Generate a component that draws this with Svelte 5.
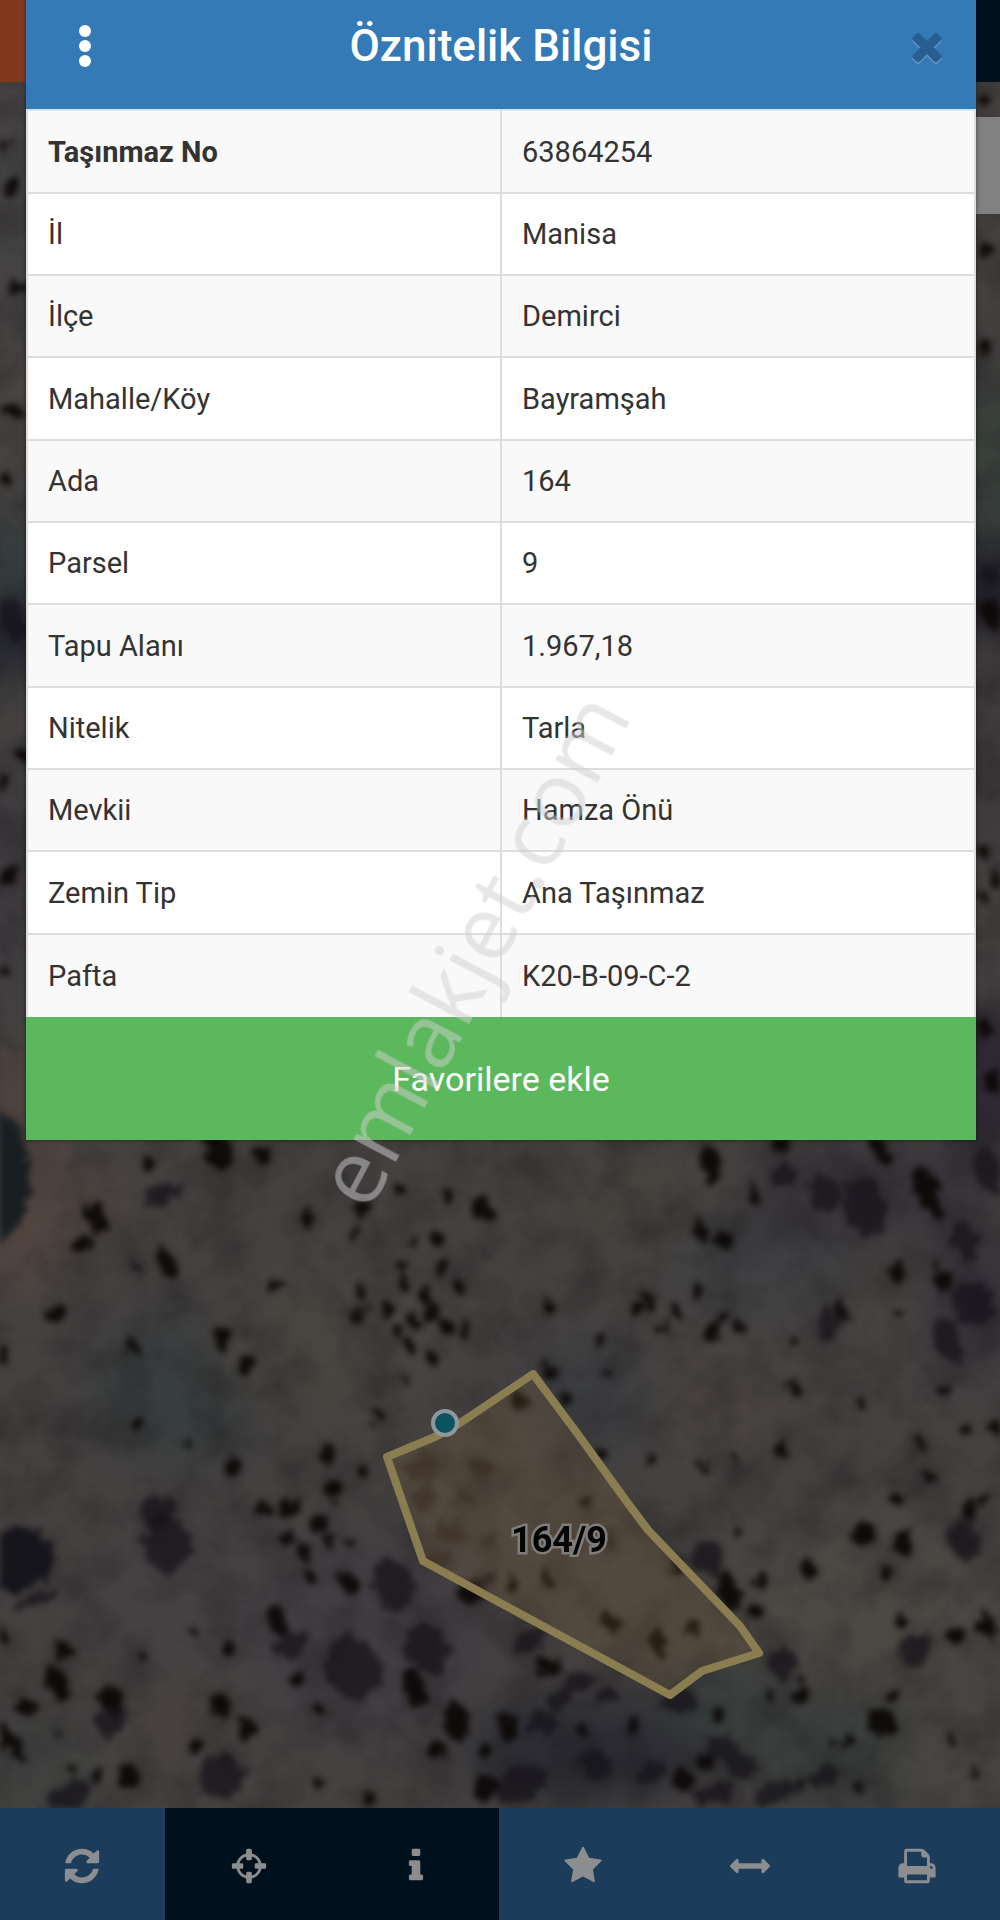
<script lang="ts">
  const rows = [
    { label: 'Taşınmaz No', value: '63864254', strong: true },
    { label: 'İl', value: 'Manisa' },
    { label: 'İlçe', value: 'Demirci' },
    { label: 'Mahalle/Köy', value: 'Bayramşah' },
    { label: 'Ada', value: '164' },
    { label: 'Parsel', value: '9' },
    { label: 'Tapu Alanı', value: '1.967,18' },
    { label: 'Nitelik', value: 'Tarla' },
    { label: 'Mevkii', value: 'Hamza Önü' },
    { label: 'Zemin Tip', value: 'Ana Taşınmaz' },
    { label: 'Pafta', value: 'K20-B-09-C-2' }
  ];

  const tools = [
    {
      name: 'Yenile',
      dark: false,
      path: 'M1639 1056q0 5-1 7-64 268-268 434.5t-478 166.5q-146 0-282.5-55t-243.5-157l-129 129q-19 19-45 19t-45-19-19-45v-448q0-26 19-45t45-19h448q26 0 45 19t19 45-19 45l-137 137q71 66 161 102t187 36q134 0 250-65t186-179q11-17 53-117 8-23 30-23h192q13 0 22.5 9.5t9.5 22.5zm25-800v448q0 26-19 45t-45 19h-448q-26 0-45-19t-19-45 19-45l138-138q-148-137-349-137-134 0-250 65t-186 179q-11 17-53 117-8 23-30 23h-199q-13 0-22.5-9.5t-9.5-22.5v-7q65-268 270-434.5t480-166.5q146 0 284 55.5t245 156.5l130-129q19-19 45-19t45 19 19 45z'
    },
    {
      name: 'Konum',
      dark: true,
      path: 'M1325 1024h-109q-26 0-45-19t-19-45v-128q0-26 19-45t45-19h109q-32-108-112.5-188.5t-188.5-112.5v109q0 26-19 45t-45 19h-128q-26 0-45-19t-19-45v-109q-108 32-188.5 112.5t-112.5 188.5h109q26 0 45 19t19 45v128q0 26-19 45t-45 19h-109q32 108 112.5 188.5t188.5 112.5v-109q0-26 19-45t45-19h128q26 0 45 19t19 45v109q108-32 188.5-112.5t112.5-188.5zm339-192v128q0 26-19 45t-45 19h-143q-37 161-154.5 278.5t-278.5 154.5v143q0 26-19 45t-45 19h-128q-26 0-45-19t-19-45v-143q-161-37-278.5-154.5t-154.5-278.5h-143q-26 0-45-19t-19-45v-128q0-26 19-45t45-19h143q37-161 154.5-278.5t278.5-154.5v-143q0-26 19-45t45-19h128q26 0 45 19t19 45v143q161 37 278.5 154.5t154.5 278.5h143q26 0 45 19t19 45z'
    },
    {
      name: 'Bilgi',
      dark: true,
      path: 'M1216 1344v128q0 26-19 45t-45 19h-512q-26 0-45-19t-19-45v-128q0-26 19-45t45-19h64v-384h-64q-26 0-45-19t-19-45v-128q0-26 19-45t45-19h384q26 0 45 19t19 45v576h64q26 0 45 19t19 45zm-128-1152v192q0 26-19 45t-45 19h-256q-26 0-45-19t-19-45v-192q0-26 19-45t45-19h256q26 0 45 19t19 45z'
    },
    {
      name: 'Favoriler',
      dark: false,
      path: 'M1728 647q0 22-26 48l-363 354 86 500q1 7 1 20 0 21-10.5 35.5t-30.5 14.5q-19 0-40-12l-449-236-449 236q-22 12-40 12-21 0-31.5-14.5t-10.5-35.5q0-6 2-20l86-500-364-354q-25-27-25-48 0-37 56-46l502-73 225-455q19-41 49-41t49 41l225 455 502 73q56 9 56 46z'
    },
    {
      name: 'Ölçüm',
      dark: false,
      path: 'M1792 896q0 26-19 45l-256 256q-19 19-45 19t-45-19-19-45v-128h-1024v128q0 26-19 45t-45 19-45-19l-256-256q-19-19-19-45t19-45l256-256q19-19 45-19t45 19 19 45v128h1024v-128q0-26 19-45t45-19 45 19l256 256q19 19 19 45z'
    },
    {
      name: 'Yazdır',
      dark: false,
      path: 'M448 1536h896v-256h-896v256zm0-640h896v-384h-160q-40 0-68-28t-28-68v-160h-640v640zm1152 64q0-26-19-45t-45-19-45 19-19 45 19 45 45 19 45-19 19-45zm128 0v416q0 13-9.5 22.5t-22.5 9.5h-224v160q0 40-28 68t-68 28h-960q-40 0-68-28t-28-68v-160h-224q-13 0-22.5-9.5t-9.5-22.5v-416q0-79 56.5-135.5t135.5-56.5h64v-544q0-40 28-68t68-28h672q40 0 88 20t76 48l152 152q28 28 48 76t20 88v256h64q79 0 135.5 56.5t56.5 135.5z'
    }
  ];

  // ground tint: x, y, rx, ry, colour
  const patches: [number, number, number, number, string][] = [
    [180, 1390, 90, 70, '#383d3e'],
    [70, 1200, 60, 40, '#4e4541'],
    [20, 1250, 40, 40, '#564944'],
    [330, 1340, 120, 90, '#484440'],
    [640, 1200, 130, 60, '#47433f'],
    [760, 1260, 90, 50, '#3f4042'],
    [700, 1400, 120, 60, '#4a4543'],
    [930, 1300, 60, 50, '#4b4641'],
    [590, 1400, 60, 60, '#3c3d40'],
    [200, 1600, 110, 60, '#464143'],
    [250, 1730, 200, 70, '#474241'],
    [40, 1770, 60, 50, '#3f413f'],
    [370, 1640, 120, 100, '#413d42'],
    [590, 1750, 130, 50, '#2c2c33'],
    [720, 1700, 60, 40, '#383e3c'],
    [860, 1600, 140, 90, '#4c4844'],
    [850, 1750, 110, 50, '#383d3b'],
    [950, 1750, 60, 70, '#484642'],
    [870, 1190, 130, 50, '#38343a'],
    [970, 1300, 50, 70, '#353139'],
    [10, 200, 40, 120, '#464445'],
    [10, 430, 40, 60, '#4a4743'],
    [10, 570, 40, 60, '#343b3d'],
    [10, 640, 40, 40, '#20232b'],
    [10, 880, 40, 120, '#3e3b3f'],
    [990, 470, 40, 100, '#38403b'],
    [990, 590, 40, 50, '#1d1c26'],
    [990, 760, 40, 100, '#3e393a'],
    [990, 1080, 40, 80, '#2d2832']
  ];

  // tree crowns and shadows: x, y, rx, ry
  const trees = [
    [218, 1150, 12, 22], [262, 1155, 7, 10], [148, 1165, 6, 10], [163, 1193, 17, 12], [98, 1217, 10, 16],
    [81, 1243, 8, 9], [168, 1263, 10, 16], [308, 1216, 5, 9], [362, 1209, 6, 6], [400, 1189, 5, 6],
    [449, 1194, 6, 7], [482, 1209, 10, 14], [275, 1283, 6, 5], [57, 1314, 9, 8], [133, 1346, 6, 6],
    [222, 1339, 8, 13], [247, 1366, 7, 11], [140, 1426, 6, 6], [187, 1444, 6, 6], [233, 1466, 10, 12],
    [377, 1414, 6, 7], [328, 1453, 10, 9], [363, 1471, 7, 7], [1, 1355, 5, 14], [414, 1243, 5, 7],
    [436, 1240, 6, 8], [405, 1283, 6, 6], [442, 1267, 7, 6], [456, 1285, 5, 7], [424, 1297, 7, 9],
    [388, 1310, 8, 6], [412, 1323, 7, 8], [433, 1313, 7, 7], [445, 1327, 8, 9], [466, 1327, 5, 7],
    [433, 1358, 5, 9], [410, 1345, 5, 8], [363, 1292, 5, 7], [356, 1317, 4, 8], [353, 1233, 5, 6],
    [400, 1267, 6, 7], [404, 1377, 4, 5], [135, 1265, 4, 8], [397, 1333, 5, 5], [366, 1309, 4, 4],
    [710, 1163, 9, 20], [752, 1190, 5, 12], [783, 1175, 14, 8], [825, 1193, 15, 18], [865, 1207, 20, 32],
    [928, 1190, 12, 26], [987, 1170, 14, 25], [702, 1230, 6, 12], [723, 1239, 9, 8], [965, 1240, 13, 20],
    [900, 1273, 8, 11], [942, 1277, 6, 16], [973, 1303, 20, 22], [947, 1340, 13, 24], [828, 1323, 14, 14],
    [843, 1310, 6, 10], [637, 1310, 7, 8], [675, 1310, 8, 7], [663, 1327, 8, 5], [711, 1332, 8, 8],
    [740, 1327, 6, 8], [697, 1289, 5, 8], [549, 1307, 6, 8], [599, 1342, 6, 6], [548, 1373, 6, 8],
    [606, 1371, 5, 6], [520, 1402, 9, 8], [568, 1400, 4, 5], [795, 1388, 6, 11], [920, 1443, 6, 9],
    [964, 1428, 5, 7], [782, 1452, 7, 8], [702, 1467, 5, 9], [650, 1458, 5, 4], [942, 1392, 5, 5],
    [602, 1455, 6, 7], [737, 1458, 5, 7], [898, 1314, 4, 5], [863, 1403, 4, 7], [793, 1339, 4, 5],
    [997, 1430, 5, 9], [780, 1143, 10, 6], [880, 1150, 8, 18], [650, 1300, 6, 9], [721, 1318, 4, 5],
    [18, 1560, 36, 32], [37, 1600, 22, 7], [157, 1510, 16, 18], [168, 1545, 24, 28], [263, 1509, 9, 10],
    [292, 1507, 12, 8], [317, 1523, 11, 8], [287, 1537, 8, 7], [303, 1550, 8, 8], [330, 1538, 5, 6],
    [348, 1541, 5, 6], [310, 1577, 5, 7], [349, 1582, 8, 13], [393, 1585, 20, 28], [277, 1620, 9, 16],
    [290, 1645, 16, 14], [353, 1667, 26, 34], [427, 1648, 20, 26], [415, 1690, 12, 20], [457, 1720, 12, 20],
    [437, 1750, 10, 10], [298, 1678, 8, 7], [318, 1708, 6, 7], [62, 1648, 7, 13], [58, 1683, 10, 18],
    [25, 1707, 9, 11], [112, 1700, 12, 15], [110, 1722, 15, 14], [218, 1704, 9, 10], [248, 1730, 8, 11],
    [5, 1737, 8, 14], [17, 1750, 6, 12], [60, 1735, 4, 5], [127, 1775, 11, 12], [72, 1793, 22, 12],
    [72, 1767, 5, 6], [97, 1775, 6, 5], [222, 1775, 22, 22], [195, 1746, 6, 7], [318, 1782, 5, 6],
    [368, 1797, 6, 6], [485, 1788, 12, 14], [485, 1750, 6, 7], [192, 1629, 4, 5], [142, 1655, 4, 5],
    [230, 1647, 5, 9], [3, 1635, 6, 8], [333, 1488, 9, 7], [337, 1503, 4, 4], [472, 1593, 12, 9],
    [707, 1557, 16, 18], [727, 1590, 11, 20], [737, 1528, 5, 7], [762, 1581, 6, 8], [755, 1612, 6, 7],
    [809, 1569, 7, 9], [863, 1535, 11, 11], [903, 1543, 10, 13], [887, 1574, 8, 6], [896, 1500, 7, 8],
    [965, 1540, 14, 20], [968, 1510, 7, 9], [983, 1498, 6, 8], [930, 1478, 4, 5], [899, 1620, 7, 9],
    [913, 1650, 15, 17], [956, 1637, 9, 8], [988, 1627, 11, 14], [782, 1663, 14, 15], [799, 1680, 6, 6],
    [802, 1697, 8, 8], [772, 1695, 5, 8], [890, 1695, 6, 5], [883, 1723, 12, 15], [833, 1743, 5, 6],
    [848, 1743, 5, 7], [952, 1740, 5, 8], [973, 1776, 5, 7], [825, 1777, 18, 10], [858, 1790, 5, 6],
    [800, 1785, 6, 6], [530, 1640, 18, 10], [550, 1667, 12, 9], [578, 1682, 15, 10], [607, 1697, 14, 9],
    [560, 1700, 14, 9], [543, 1722, 16, 11], [507, 1730, 8, 14], [632, 1727, 9, 7], [583, 1732, 6, 5],
    [680, 1700, 16, 12], [718, 1713, 6, 10], [722, 1750, 16, 14], [743, 1767, 16, 12], [705, 1763, 8, 10],
    [595, 1765, 14, 18], [652, 1773, 14, 10], [683, 1780, 10, 12], [520, 1785, 26, 18], [713, 1795, 20, 10],
    [773, 1793, 20, 10], [547, 1580, 6, 11], [612, 1623, 11, 10], [659, 1643, 7, 14], [693, 1628, 6, 8],
    [512, 1583, 7, 9], [588, 1502, 5, 9], [677, 1567, 8, 7], [480, 1582, 18, 6],
    [4, 144, 7, 8], [12, 186, 7, 8], [17, 288, 10, 6], [13, 410, 8, 6], [5, 481, 6, 5], [12, 620, 14, 22],
    [23, 755, 6, 9], [3, 783, 6, 10], [10, 874, 10, 9], [5, 972, 6, 5], [984, 100, 7, 7], [985, 250, 9, 6],
    [985, 348, 8, 8], [990, 575, 14, 10], [993, 614, 12, 14], [983, 850, 5, 8], [997, 880, 5, 8],
    [984, 900, 5, 6], [984, 1028, 6, 9], [993, 1085, 10, 12]
  ];

  // softer scrub inside the parcel
  const scrub = [
    [420, 1468, 18, 14], [483, 1467, 13, 11], [465, 1497, 9, 8], [425, 1500, 13, 14], [450, 1530, 14, 9],
    [440, 1560, 12, 8], [490, 1540, 7, 6], [610, 1540, 6, 10]
  ];

  let open = $state(true);
  let favorite = $state(false);
</script>

<svelte:head>
  <title>Öznitelik Bilgisi</title>
</svelte:head>

<div class="screen">
  <header class="topbar">
    <button class="menu-btn" aria-label="Menü"></button>
  </header>

  <main class="map">
    <svg class="map-canvas" viewBox="0 82 1000 1726" preserveAspectRatio="xMidYMax slice" role="img" aria-label="Harita">
      <defs>
        <filter id="ground" x="0" y="0" width="100%" height="100%" color-interpolation-filters="sRGB">
          <feTurbulence type="fractalNoise" baseFrequency="0.02" numOctaves="4" seed="8" />
          <feColorMatrix values="0 0 0 0 0.08  0 0 0 0 0.07  0 0 0 0 0.08  1.6 0 0 0 -0.6" />
        </filter>
        <filter id="soft" x="-100%" y="-100%" width="300%" height="300%" color-interpolation-filters="sRGB">
          <feGaussianBlur stdDeviation="24" />
        </filter>
        <filter id="rough" x="0" y="82" width="1000" height="1726" filterUnits="userSpaceOnUse" color-interpolation-filters="sRGB">
          <feTurbulence type="fractalNoise" baseFrequency="0.09" numOctaves="2" seed="3" result="noise" />
          <feDisplacementMap in="SourceGraphic" in2="noise" scale="20" xChannelSelector="R" yChannelSelector="G" />
          <feGaussianBlur stdDeviation="3" />
        </filter>
      </defs>

      <rect y="82" width="1000" height="1726" fill="#444140" />
      <g filter="url(#soft)">
        {#each patches as [x, y, rx, ry, fill]}
          <ellipse cx={x} cy={y} {rx} {ry} {fill} />
        {/each}
      </g>
      <rect y="82" width="1000" height="1726" filter="url(#ground)" opacity="0.4" />
      <g filter="url(#rough)">
        <path d="M-20 1290 Q60 1240 72 1140 L50 1060 L-20 1040 Z" fill="#51443f" opacity="0.6" />
        <ellipse cx="-8" cy="1176" rx="38" ry="66" fill="#181e22" />
        {#each trees as [x, y, rx, ry]}
          <ellipse
            cx={x}
            cy={y}
            {rx}
            {ry}
            transform="rotate(-20 {x} {y})"
            fill={rx > 12 ? '#15131a' : '#0c0807'}
            opacity={rx > 30 ? 0.95 : rx > 12 ? 0.75 : 0.95}
          />
        {/each}
        {#each scrub as [x, y, rx, ry]}
          <ellipse cx={x} cy={y} {rx} {ry} fill="#1c1311" opacity="0.45" />
        {/each}
      </g>

      <!-- parcel outline -->
      <path
        class="parcel"
        d="M533 1374 L460 1423 L437 1436 L387 1457 L423 1561 L670 1695 L702 1671 L759 1653 L740 1626 L648 1530 L627 1502 L577 1433 Z"
      />
      <circle class="vertex" cx="445" cy="1423" r="12" />
      <text class="parcel-label" x="559" y="1552" text-anchor="middle">164/9</text>
    </svg>

    <button class="layers-btn" aria-label="Katmanlar"></button>
  </main>

  <nav class="toolbar" aria-label="Harita araçları">
    {#each tools as tool}
      <button class="tool" class:dark={tool.dark} aria-label={tool.name}>
        <svg viewBox="0 0 1792 1792" aria-hidden="true"><path d={tool.path} /></svg>
      </button>
    {/each}
  </nav>

  {#if open}
    <section class="modal" role="dialog" aria-labelledby="modal-title">
      <div class="modal-header">
        <button class="icon-btn options" aria-label="Seçenekler">
          <svg class="dots" viewBox="0 0 12 42" aria-hidden="true">
            <circle cx="6" cy="6" r="6" />
            <circle cx="6" cy="21" r="6" />
            <circle cx="6" cy="36" r="6" />
          </svg>
        </button>
        <h1 id="modal-title">Öznitelik Bilgisi</h1>
        <button class="icon-btn" aria-label="Kapat" onclick={() => (open = false)}>
          <svg class="times" viewBox="0 0 1792 1792" aria-hidden="true">
            <path d="M1490 1322q0 40-28 68l-136 136q-28 28-68 28t-68-28l-294-294-294 294q-28 28-68 28t-68-28l-136-136q-28-28-28-68t28-68l294-294-294-294q-28-28-28-68t28-68l136-136q28-28 68-28t68 28l294 294 294-294q28-28 68-28t68 28l136 136q28 28 28 68t-28 68l-294 294 294 294q28 28 28 68z" />
          </svg>
        </button>
      </div>

      <table>
        <tbody>
          {#each rows as row}
            <tr>
              <th scope="row" class:strong={row.strong}>{row.label}</th>
              <td>{row.value}</td>
            </tr>
          {/each}
        </tbody>
      </table>

      <button class="favorite" aria-pressed={favorite} onclick={() => (favorite = !favorite)}>
        Favorilere ekle
      </button>
    </section>
  {/if}

  <div class="watermark" aria-hidden="true">emlakjet.com</div>
</div>

<style>
  :global(body) {
    margin: 0;
    background: #3e3c3b;
  }

  .screen {
    position: relative;
    display: flex;
    flex-direction: column;
    min-height: 100vh;
    overflow: hidden;
    font-family: Roboto, 'Liberation Sans', sans-serif;
    color: #333;
  }

  button {
    margin: 0;
    padding: 0;
    border: 0;
    font: inherit;
    color: inherit;
    cursor: pointer;
  }

  .topbar {
    display: flex;
    height: 82px;
    background: #00101c;
  }

  .menu-btn {
    width: 82px;
    background: #80391b;
  }

  .map {
    position: relative;
    flex: 1;
  }

  .map-canvas {
    position: absolute;
    inset: 0;
    width: 100%;
    height: 100%;
  }

  .parcel {
    fill: rgba(150, 112, 60, 0.18);
    stroke: #8a7e50;
    stroke-width: 8;
    stroke-linejoin: round;
  }

  .vertex {
    fill: #0b5360;
    stroke: #8d979c;
    stroke-width: 4;
  }

  .parcel-label {
    font-size: 36px;
    font-weight: 700;
    fill: #050505;
    stroke: #7f7c7a;
    stroke-width: 5;
    paint-order: stroke;
  }

  .layers-btn {
    position: absolute;
    top: 35px;
    right: 0;
    width: 64px;
    height: 97px;
    background: #818181;
  }

  .toolbar {
    position: relative;
    display: grid;
    grid-template-columns: repeat(6, 1fr);
    height: 112px;
    margin-left: -2px;
    background: #1b3d5b;
  }

  .tool {
    display: flex;
    align-items: center;
    justify-content: center;
    padding-top: 4px;
    background: #1b3d5b;
  }

  .tool.dark {
    background: #00101c;
  }

  .tool svg {
    width: 40px;
    height: 40px;
    fill: #8b8d8f;
  }

  .modal {
    position: absolute;
    top: 0;
    left: 26px;
    right: 24px;
    background: #fff;
    box-shadow: 0 0 4px rgba(0, 0, 0, 0.5);
  }

  .modal-header {
    display: grid;
    grid-template-columns: 98px 1fr 98px;
    align-items: center;
    box-sizing: border-box;
    height: 109px;
    padding-bottom: 17px;
    background: #337ab7;
    color: #fff;
  }

  h1 {
    margin: 0;
    font-size: 44px;
    font-weight: 500;
    line-height: 48px;
    text-align: center;
  }

  .icon-btn {
    display: flex;
    align-items: center;
    justify-content: center;
    height: 80px;
    background: none;
  }

  .options {
    padding-left: 20px;
  }

  .dots {
    width: 12px;
    height: 42px;
    fill: #fff;
  }

  .times {
    width: 44px;
    height: 44px;
    fill: #295f90;
    filter: drop-shadow(0 2px 0 #5b96c9);
  }

  table {
    width: 100%;
    table-layout: fixed;
    border-collapse: separate;
    border-spacing: 0;
    border-top: 2px solid #d5e4f1;
    border-left: 2px solid #ddd;
    font-size: 29px;
    line-height: 40px;
  }

  tr {
    height: 82px;
    background: #fff;
  }

  tr:nth-child(odd) {
    background: #f9f9f9;
  }

  tr:nth-child(3n + 1) {
    height: 83px;
  }

  th,
  td {
    padding: 0 20px;
    border-right: 2px solid #ddd;
    border-bottom: 2px solid #ddd;
    font-weight: 400;
    text-align: left;
  }

  tr:last-child th,
  tr:last-child td {
    border-bottom: 0;
  }

  th.strong {
    font-weight: 700;
  }

  .favorite {
    display: block;
    width: 100%;
    height: 123px;
    background: #5cb85c;
    color: #fff;
    font-size: 34px;
    line-height: 40px;
  }

  .watermark {
    position: absolute;
    top: 948px;
    left: 47%;
    transform: translate(-50%, -50%) rotate(-62deg);
    font-family: 'Open Sans', 'Noto Sans', sans-serif;
    font-size: 90px;
    line-height: 1;
    white-space: nowrap;
    color: rgba(208, 208, 208, 0.5);
    pointer-events: none;
  }
</style>
